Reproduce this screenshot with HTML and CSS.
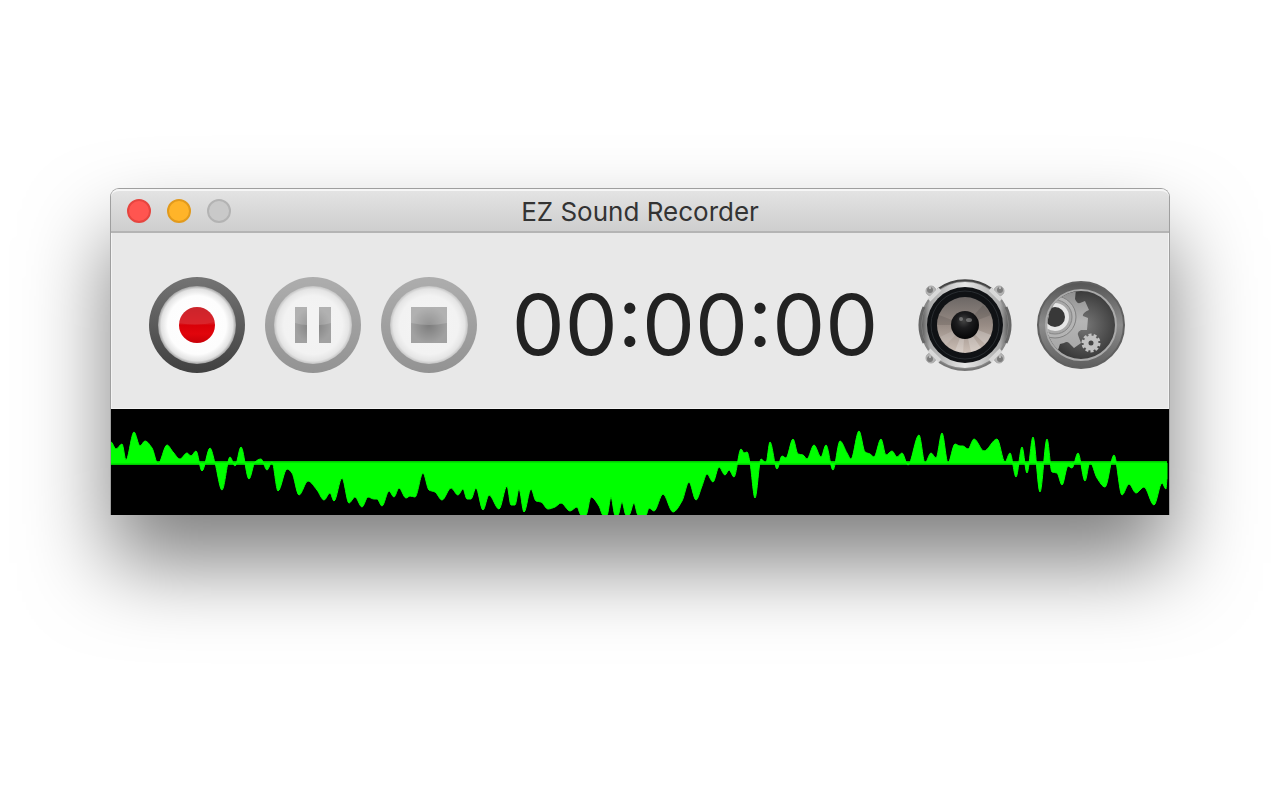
FILE: index.html
```html
<!DOCTYPE html>
<html lang="en">
<head>
    <meta charset="UTF-8">
    <meta name="viewport" content="width=device-width, initial-scale=1.0">
    <title>EZ Sound Recorder</title>
    <link rel="stylesheet" href="styles.css">
</head>
<body>
    <main class="window">
        <header class="titlebar">
            <div class="window-buttons">
                <button class="dot dot-close" aria-label="Close"></button>
                <button class="dot dot-minimize" aria-label="Minimize"></button>
                <button class="dot dot-zoom" aria-label="Zoom" disabled></button>
            </div>
            <h1 class="title">EZ Sound Recorder</h1>
        </header>

        <section class="toolbar">
            <div class="button-group">
                <button class="round-button" aria-label="Record">
                    <svg viewBox="0 0 96 96">
                        <defs>
                            <linearGradient id="ring" x1="0" y1="0" x2="0" y2="1">
                                <stop offset="0" stop-color="#747474"/>
                                <stop offset="1" stop-color="#404040"/>
                            </linearGradient>
                            <radialGradient id="face">
                                <stop offset="0" stop-color="#fff"/>
                                <stop offset="0.75" stop-color="#fdfdfd"/>
                                <stop offset="0.92" stop-color="#e2e2e2"/>
                                <stop offset="1" stop-color="#a0a0a0"/>
                            </radialGradient>
                            <linearGradient id="red" x1="0" y1="0" x2="0" y2="1">
                                <stop offset="0" stop-color="#c8141b"/>
                                <stop offset="0.47" stop-color="#d8141b"/>
                                <stop offset="0.5" stop-color="#d90008"/>
                                <stop offset="0.75" stop-color="#e1050c"/>
                                <stop offset="1" stop-color="#c80008"/>
                            </linearGradient>
                            <radialGradient id="grey">
                                <stop offset="0" stop-color="#141414"/>
                                <stop offset="1" stop-color="#5c5c5c"/>
                            </radialGradient>
                        </defs>
                        <circle cx="48" cy="48" r="48" fill="url(#ring)"/>
                        <circle cx="48" cy="48" r="39" fill="url(#face)"/>
                        <circle cx="48" cy="48" r="18" fill="url(#red)"/>
                        <path d="M30 46a18 18 0 0 1 36-1q-18 5-36 1z" fill="#fff" opacity="0.07"/>
                    </svg>
                </button>
                <button class="round-button" aria-label="Pause" disabled>
                    <svg viewBox="0 0 96 96">
                        <circle cx="48" cy="48" r="48" fill="url(#ring)"/>
                        <circle cx="48" cy="48" r="39" fill="url(#face)"/>
                        <path d="M30 30h12v36H30zM54 30h12v36H54z" fill="url(#grey)"/>
                        <path d="M30 30h12v18q-6 0-12-2zM54 30h12v16q-6 2-12 2z" fill="#fff" opacity="0.2"/>
                    </svg>
                </button>
                <button class="round-button" aria-label="Stop" disabled>
                    <svg viewBox="0 0 96 96">
                        <circle cx="48" cy="48" r="48" fill="url(#ring)"/>
                        <circle cx="48" cy="48" r="39" fill="url(#face)"/>
                        <path d="M30 30h36v36H30z" fill="url(#grey)"/>
                        <path d="M30 30h36v16q-18 4-36 0z" fill="#fff" opacity="0.2"/>
                    </svg>
                </button>
            </div>

            <time class="timer">00:00:00</time>

            <div class="button-group">
                <button class="round-button" aria-label="Speaker">
                    <svg viewBox="0 0 96 96">
                        <defs>
                            <linearGradient id="frame" x1="0" y1="0" x2="1" y2="0">
                                <stop offset="0" stop-color="#555"/>
                                <stop offset="0.1" stop-color="#aaa"/>
                                <stop offset="0.5" stop-color="#e6e6e6"/>
                                <stop offset="0.9" stop-color="#aaa"/>
                                <stop offset="1" stop-color="#555"/>
                            </linearGradient>
                            <linearGradient id="cone" x1="0" y1="0" x2="0" y2="1">
                                <stop offset="0" stop-color="#6c6765"/>
                                <stop offset="0.5" stop-color="#978b84"/>
                                <stop offset="1" stop-color="#cdc0b7"/>
                            </linearGradient>
                            <radialGradient id="cap" cx="0.45" cy="0.35" r="0.65">
                                <stop offset="0" stop-color="#444"/>
                                <stop offset="0.4" stop-color="#1c1c1e"/>
                                <stop offset="1" stop-color="#050506"/>
                            </radialGradient>
                        </defs>
                        <g fill="#b4b4b4" stroke="#a8a8a8" stroke-width="1">
                            <circle cx="14" cy="14" r="5"/>
                            <circle cx="82" cy="14" r="5"/>
                            <circle cx="14" cy="81" r="5"/>
                            <circle cx="82" cy="81" r="5"/>
                        </g>
                        <circle cx="48" cy="48" r="44" fill="url(#frame)" stroke="#888" stroke-width="2"/>
                        <path d="M21 12a46 46 0 0 1 54 0" fill="none" stroke="#444" stroke-width="2"/>
                        <path d="M22 85a46 46 0 0 0 52 0" fill="none" stroke="#777" stroke-width="2"/>
                        <path d="M7 30a44 44 0 0 0 0 36M89 30a44 44 0 0 1 0 36" fill="none" stroke="#666" stroke-width="3"/>
                        <path d="M12 23L23 12M73 12l11 11M12 73l11 11M73 84l11-11" stroke="#d8d8d8" stroke-width="4"/>
                        <g fill="#7c7c7c">
                            <circle cx="13" cy="13" r="3"/>
                            <circle cx="83" cy="13" r="3"/>
                            <circle cx="13" cy="82" r="3"/>
                            <circle cx="83" cy="82" r="3"/>
                        </g>
                        <g fill="#ccc">
                            <circle cx="13" cy="11" r="1"/>
                            <circle cx="83" cy="11" r="1"/>
                            <circle cx="13" cy="80" r="1"/>
                            <circle cx="83" cy="80" r="1"/>
                        </g>
                        <circle cx="48" cy="48" r="38" fill="#101215"/>
                        <circle cx="48" cy="48" r="34" fill="none" stroke="#292d31" stroke-width="1"/>
                        <circle cx="48" cy="48" r="28" fill="url(#cone)"/>
                        <path d="M48 48L38 74a28 28 0 0 0 8 2zM48 48l6 27a28 28 0 0 0 10-4zM48 48l20 19a28 28 0 0 0 6-9z" fill="#fff" opacity="0.22"/>
                        <path d="M48 48L23 60a28 28 0 0 0 6 8z" fill="#fff" opacity="0.12"/>
                        <path d="M48 48L22 38a28 28 0 0 0-2 10zM48 48l26-10a28 28 0 0 0-8-10z" fill="#000" opacity="0.1"/>
                        <circle cx="48" cy="48" r="14" fill="url(#cap)"/>
                        <ellipse cx="44" cy="42" rx="2" ry="2" fill="#999" opacity="0.6"/>
                        <ellipse cx="52" cy="43" rx="3" ry="2" fill="#999" opacity="0.6"/>
                    </svg>
                </button>
                <button class="round-button" aria-label="Settings">
                    <svg viewBox="0 0 96 96">
                        <defs>
                            <linearGradient id="rim" x1="0" y1="0" x2="0" y2="1">
                                <stop offset="0" stop-color="#555"/>
                                <stop offset="0.5" stop-color="#8c8c8c"/>
                                <stop offset="1" stop-color="#5e5e5e"/>
                            </linearGradient>
                            <radialGradient id="well" cx="0.55" cy="0.5" r="0.55">
                                <stop offset="0" stop-color="#777"/>
                                <stop offset="1" stop-color="#333"/>
                            </radialGradient>
                            <linearGradient id="gear" x1="0" y1="0" x2="0" y2="1">
                                <stop offset="0" stop-color="#8c8c8c"/>
                                <stop offset="0.5" stop-color="#b5b5b5"/>
                                <stop offset="1" stop-color="#a6a6a6"/>
                            </linearGradient>
                            <clipPath id="hole"><circle cx="48" cy="48" r="34"/></clipPath>
                        </defs>
                        <circle cx="48" cy="48" r="43" fill="url(#rim)" stroke="#606060" stroke-width="2"/>
                        <circle cx="48" cy="48" r="35" fill="url(#well)" stroke="#aaa" stroke-width="2"/>
                        <g clip-path="url(#hole)">
                            <path d="M10 12H43L42 22Q44 27 47 26L52 24L56 33Q49 36 50 39L55 41L54 53L48 53Q44 55 45 58L48 66L41 71L36 66Q34 64 31 66L27 67L24 76L8 66Z" fill="url(#gear)"/>
                            <circle cx="22" cy="40" r="21" fill="#b4b4b4" stroke="#808080" stroke-width="1"/>
                            <circle cx="22" cy="40" r="17" fill="#a8a8a8" stroke="#858585" stroke-width="1"/>
                            <circle cx="22" cy="40" r="12" fill="#383838" stroke="#e6e6e6" stroke-width="4"/>
                            <path d="M15 58A34 34 0 0 1 15 38" fill="none" stroke="#c8c8c8" stroke-width="2"/>
                        </g>
                        <circle cx="58" cy="66" r="8" fill="none" stroke="#c2c2c2" stroke-width="3" stroke-dasharray="3 2"/>
                        <circle cx="58" cy="66" r="5" fill="#444" stroke="#c2c2c2" stroke-width="5"/>
                    </svg>
                </button>
            </div>
        </section>

        <svg class="waveform" viewBox="0 0 1058 106" preserveAspectRatio="none" role="img" aria-label="Waveform">
            <path d="M0 54H1056" class="baseline"/>
            <path id="wave"/>
        </svg>
    </main>

    <script src="script.js"></script>
</body>
</html>
```

FILE: styles.css
```css
* {
    box-sizing: border-box;
}

body {
    margin: 0;
    padding: 188px 110px;
    background: #fff;
    color: #222;
    font-family: Inter, "Liberation Sans", sans-serif;
    overflow: hidden;
}

button {
    padding: 0;
    border: none;
    background: none;
}

.window {
    border: 1px solid #9f9f9f;
    border-bottom: none;
    border-radius: 9px 9px 0 0;
    background: #e8e8e8;
    box-shadow: 0 48px 84px rgba(0, 0, 0, 0.5);
}

.titlebar {
    display: grid;
    grid-template-columns: 1fr auto 1fr;
    align-items: center;
    height: 44px;
    padding: 0 16px;
    border-top: 2px solid #f6f6f6;
    border-bottom: 2px solid #b4b4b4;
    border-radius: 8px 8px 0 0;
    background: linear-gradient(#e3e3e3, #cecece);
}

.window-buttons {
    display: flex;
    gap: 16px;
}

.dot {
    width: 24px;
    height: 24px;
    border: 2px solid;
    border-radius: 50%;
}

.dot-close {
    background: #ff5550;
    border-color: #e6453f;
}

.dot-minimize {
    background: #ffb429;
    border-color: #e29a1c;
}

.dot-zoom {
    background: #c9c9c9;
    border-color: #b3b3b3;
}

.title {
    margin: 0;
    padding-top: 2px;
    font-size: 26px;
    font-weight: 400;
    line-height: 32px;
    color: #333;
}

.toolbar {
    display: flex;
    align-items: center;
    padding: 44px 39px 35px 37px;
    border: 1px solid #f3f3f3;
    border-top: none;
}

.button-group {
    display: flex;
    gap: 20px;
}

.round-button {
    width: 96px;
    height: 96px;
}

.round-button svg {
    display: block;
    width: 100%;
    height: 100%;
}

.round-button:disabled {
    opacity: 0.5;
}

.timer {
    flex: 1;
    padding-right: 4px;
    text-align: center;
    font-size: 84px;
    line-height: 96px;
    white-space: nowrap;
}

.waveform {
    display: block;
    width: 100%;
    height: 106px;
    background: #000;
    fill: #0f0;
    stroke: #0f0;
    stroke-linejoin: round;
}

.baseline {
    stroke: #00c800;
    stroke-width: 4;
}
```

FILE: script.js
```js
// Peaks and valleys of the recorded signal, zero level at 54
const samples = [
    [0,33],[5,40],[11,35],[15,51],[23,23],[29,37],[34,32],[41,39],[47,55],[56,36],[62,43],[69,50],
    [76,44],[80,47],[85,42],[91,62],[99,39],[104,54],[111,81],[119,48],[124,57],[130,38],[138,70],
    [144,53],[150,50],[156,61],[161,53],[167,82],[176,60],[181,64],[188,86],[197,72],[206,81],
    [213,91],[219,84],[223,92],[231,69],[238,94],[244,88],[251,98],[257,88],[263,90],[266,90],
    [271,97],[278,82],[283,88],[288,79],[295,89],[299,87],[304,88],[312,64],[318,81],[324,83],
    [331,91],[340,79],[347,86],[352,80],[356,90],[360,90],[365,79],[372,101],[378,86],[388,100],
    [396,77],[400,96],[404,96],[408,80],[413,103],[420,80],[425,92],[430,93],[437,100],[444,98],
    [450,94],[459,102],[466,98],[470,106],[475,106],[480,88],[488,97],[492,106],[496,106],[500,88],
    [504,106],[507,106],[511,93],[515,106],[518,106],[523,94],[527,106],[535,106],[538,99],
    [543,102],[552,85],[562,103],[571,92],[578,73],[585,91],[591,77],[596,65],[602,73],[608,58],
    [614,66],[618,61],[623,68],[630,40],[633,44],[636,43],[639,54],[644,89],[650,50],[655,54],
    [659,33],[666,60],[671,47],[675,49],[682,30],[687,45],[692,46],[696,50],[703,36],[710,48],
    [715,36],[722,61],[729,32],[736,44],[740,50],[748,22],[754,43],[759,45],[763,48],[770,30],
    [775,46],[781,42],[786,48],[791,44],[797,56],[808,26],[814,54],[820,44],[825,49],[831,24],
    [837,54],[844,35],[849,37],[852,37],[857,40],[863,30],[873,42],[886,30],[894,53],[899,44],
    [905,68],[911,38],[916,64],[922,28],[929,83],[936,30],[941,63],[946,64],[951,76],[957,57],
    [961,59],[967,44],[974,72],[979,53],[986,69],[994,78],[1003,46],[1011,86],[1018,75],[1025,84],
    [1033,78],[1043,96],[1051,74],[1055,80],[1056,70]
];

// Flat at peaks and valleys, gentle slope in between
function slope(i) {
    const prev = samples[i - 1];
    const cur = samples[i];
    const next = samples[i + 1];
    if (!prev || !next) return 0;
    const a = (cur[1] - prev[1]) / (cur[0] - prev[0]);
    const b = (next[1] - cur[1]) / (next[0] - cur[0]);
    return a * b <= 0 ? 0 : 2 * a * b / (a + b);
}

let d = `M0 54L${samples[0]}`;
for (let i = 1; i < samples.length; i++) {
    const [x0, y0] = samples[i - 1];
    const [x1, y1] = samples[i];
    const h = (x1 - x0) / 3;
    d += `C${x0 + h} ${y0 + h * slope(i - 1)} ${x1 - h} ${y1 - h * slope(i)} ${x1} ${y1}`;
}
document.getElementById('wave').setAttribute('d', d + 'V54Z');
```
